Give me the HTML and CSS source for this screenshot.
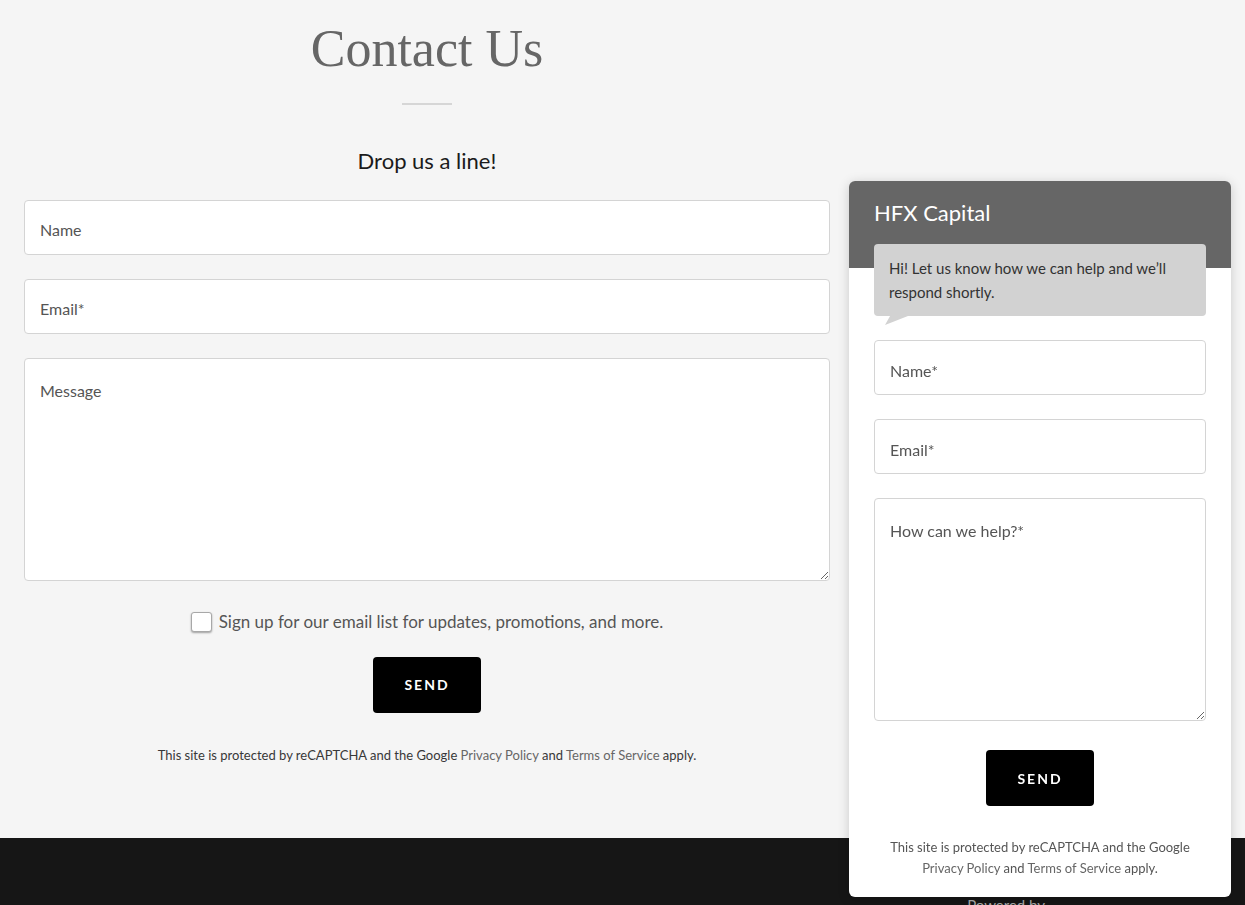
FILE: index.html
```html
<!DOCTYPE html>
<html lang="en">
<head>
  <meta charset="UTF-8" />
  <meta name="viewport" content="width=device-width, initial-scale=1.0"/>
  <title>Contact Us | HFX Capital</title>
  <link rel="stylesheet" href="styles.css">
</head>
<body>

  <main class="contact">
    <section class="contact-col">
      <h1 class="contact-title">Contact Us</h1>
      <hr class="title-rule">
      <h2 class="contact-lead">Drop us a line!</h2>

      <!-- Main contact form -->
      <form class="form" onsubmit="return false">
        <input class="field" type="text" placeholder="Name">
        <input class="field" type="email" placeholder="Email*">
        <textarea class="field field-area" placeholder="Message"></textarea>
        <label class="signup">
          <input class="signup-box" type="checkbox">
          <span>Sign up for our email list for updates, promotions, and more.</span>
        </label>
        <button class="send" type="submit">Send</button>
        <p class="recaptcha">This site is protected by reCAPTCHA and the Google <a href="#">Privacy Policy</a> and <a href="#">Terms of Service</a> apply.</p>
      </form>
    </section>
  </main>

  <footer class="site-footer">
    <span class="powered">Powered by</span>
  </footer>

  <!-- Chat widget -->
  <aside class="chat">
    <div class="chat-head">HFX Capital</div>
    <div class="chat-bubble">Hi! Let us know how we can help and we’ll respond shortly.</div>
    <form class="chat-form" onsubmit="return false">
      <input class="field" type="text" placeholder="Name*">
      <input class="field" type="email" placeholder="Email*">
      <textarea class="field field-area" placeholder="How can we help?*"></textarea>
      <button class="send" type="submit">Send</button>
      <p class="recaptcha">This site is protected by reCAPTCHA and the Google <a href="#">Privacy Policy</a> and <a href="#">Terms of Service</a> apply.</p>
    </form>
  </aside>

</body>
</html>
```

FILE: styles.css
```css
* {
  box-sizing: border-box;
  margin: 0;
  padding: 0;
}
body {
  font-family: Lato, "Liberation Sans", sans-serif;
  background: #f5f5f5;
  color: #1b1b1b;
}
.contact {
  padding: 18px 24px 73px;
}
.contact-col {
  width: 806px;
  display: flex;
  flex-direction: column;
  align-items: center;
}
.contact-title {
  font-family: "Liberation Serif", serif;
  font-weight: 400;
  font-size: 52px;
  line-height: 1.2;
  color: #666;
}
.title-rule {
  width: 50px;
  height: 2px;
  border: none;
  background: #d6d6d6;
  margin-top: 23px;
}
.contact-lead {
  font-weight: 400;
  font-size: 22px;
  line-height: 1.25;
  margin-top: 42px;
  color: #1b1b1b;
}
.form {
  width: 100%;
  margin-top: 25px;
  display: flex;
  flex-direction: column;
  align-items: center;
}
.field {
  width: 100%;
  height: 55px;
  padding: 5px 15px 0;
  font-family: inherit;
  font-size: 16px;
  color: #4a4a4a;
  background: #fff;
  border: 1px solid #d4d4d4;
  border-radius: 4px;
  margin-bottom: 24px;
  outline: none;
}
.field::placeholder {
  color: #555;
}
.field-area {
  height: 223px;
  padding: 22px 15px;
  resize: vertical;
  margin-bottom: 29px;
}
.signup {
  display: flex;
  align-items: center;
  gap: 7px;
  font-size: 17px;
  line-height: 24px;
  color: #555;
}
.signup-box {
  appearance: none;
  width: 21px;
  height: 20px;
  background: #fff;
  border: 1px solid #a8a8a8;
  border-radius: 3px;
  box-shadow: 0 1px 2px rgba(0, 0, 0, 0.35);
}
.send {
  margin-top: 23px;
  width: 108px;
  height: 56px;
  background: #000;
  color: #fff;
  border: none;
  border-radius: 4px;
  font-family: inherit;
  font-size: 14px;
  font-weight: 700;
  letter-spacing: 2px;
  text-transform: uppercase;
  cursor: pointer;
}
.recaptcha {
  margin-top: 32px;
  font-size: 13px;
  line-height: 20px;
  color: #383838;
  text-align: center;
}
.recaptcha a {
  color: #666;
  text-decoration: none;
}
.site-footer {
  background: #161616;
  height: 140px;
  padding: 58px 200px 0 0;
  display: flex;
  justify-content: flex-end;
}
.powered {
  font-size: 15px;
  color: #aaa;
}

/* floating chat panel */
.chat {
  position: fixed;
  right: 14px;
  bottom: 8px;
  width: 382px;
  height: 716px;
  background: #fff;
  border-radius: 6px;
  overflow: hidden;
  box-shadow: 0 2px 12px rgba(0, 0, 0, 0.18);
}
.chat-head {
  height: 87px;
  padding: 18px 25px 0;
  background: #666;
  color: #fff;
  font-size: 22px;
  line-height: 1.3;
}
.chat-bubble {
  position: relative;
  margin: -24px 25px 0;
  padding: 12px 15px;
  background: #d2d2d2;
  border-radius: 4px;
  font-size: 15px;
  line-height: 24px;
  color: #333;
}
.chat-bubble::after {
  content: "";
  position: absolute;
  left: 11px;
  top: 100%;
  width: 23px;
  height: 9px;
  background: #d2d2d2;
  clip-path: polygon(22% 0, 100% 0, 0 100%);
}
.chat-form {
  padding: 24px 25px 0;
  display: flex;
  flex-direction: column;
  align-items: center;
}
.chat-form .field-area {
  margin-bottom: 0;
}
.chat-form .send {
  margin-top: 29px;
}
.chat-form .recaptcha {
  margin-top: 31px;
  line-height: 21px;
  color: #555;
  padding: 0 8px;
}
```
